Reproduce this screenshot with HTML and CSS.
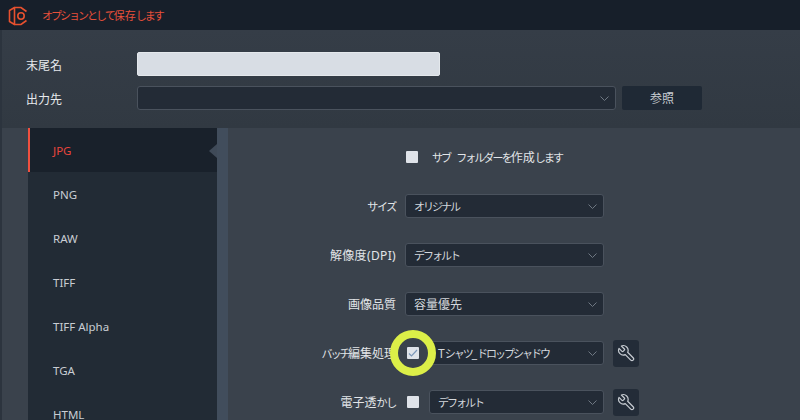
FILE: index.html
```html
<!DOCTYPE html>
<html lang="ja">
<head>
<meta charset="utf-8">
<title>オプションとして保存します</title>
<link rel="stylesheet" href="styles.css">
</head>
<body>
<div class="window">
  <header class="titlebar">
    <svg class="logo" width="20" height="20" viewBox="0 0 20 20" fill="none" stroke="#e8512f" stroke-width="1.6">
      <path d="M6.5 1.5 L1.5 4.5 V15.5 L6.5 18.5 Z" stroke-linejoin="round"/>
      <path d="M6.5 1.5 H13 L18.5 5.5 M18.5 14.5 L13 18.5 H6.5"/>
      <circle cx="13" cy="10" r="3.2"/>
    </svg>
    <span class="title"><span class="kana">オプションとして</span>保存<span class="kana">します</span></span>
  </header>
  <section class="top">
    <div class="top-row">
      <span class="top-label">末尾名</span>
      <div class="text-input"></div>
    </div>
    <div class="top-row">
      <span class="top-label">出力先</span>
      <div class="select path"><svg class="chev" width="9" height="5" viewBox="0 0 9 5"><path d="M.5 .5 L4.5 4.5 L8.5 .5" fill="none" stroke="#6f7883" stroke-width="1"/></svg></div>
      <button class="browse">参照</button>
    </div>
  </section>
  <main class="main">
    <nav class="sidebar">
      <div class="item active">JPG</div>
      <div class="item">PNG</div>
      <div class="item">RAW</div>
      <div class="item">TIFF</div>
      <div class="item">TIFF Alpha</div>
      <div class="item">TGA</div>
      <div class="item">HTML</div>
    </nav>
    <div class="scroll"><span class="pointer"></span></div>
    <div class="content">
      <div class="row check-row">
        <span class="checkbox"></span>
        <span class="check-text"><span class="kana">サブ フォルダーを</span>作成<span class="kana">します</span></span>
      </div>
      <div class="row">
        <span class="label"><span class="kana">サイズ</span></span>
        <div class="select wide"><span class="kana">オリジナル</span><svg class="chev" width="9" height="5" viewBox="0 0 9 5"><path d="M.5 .5 L4.5 4.5 L8.5 .5" fill="none" stroke="#6f7883" stroke-width="1"/></svg></div>
      </div>
      <div class="row">
        <span class="label spaced">解像度(DPI)</span>
        <div class="select wide"><span class="kana">デフォルト</span><svg class="chev" width="9" height="5" viewBox="0 0 9 5"><path d="M.5 .5 L4.5 4.5 L8.5 .5" fill="none" stroke="#6f7883" stroke-width="1"/></svg></div>
      </div>
      <div class="row">
        <span class="label">画像品質</span>
        <div class="select wide"><span>容量優先</span><svg class="chev" width="9" height="5" viewBox="0 0 9 5"><path d="M.5 .5 L4.5 4.5 L8.5 .5" fill="none" stroke="#6f7883" stroke-width="1"/></svg></div>
      </div>
      <div class="row">
        <span class="label"><span class="kana tight">バッチ</span>編集処理</span>
        <span class="checkbox inline">
          <svg width="10" height="8" viewBox="0 0 10 8"><path d="M1 4.5 L3.5 7 L9 1" fill="none" stroke="#7c97b8" stroke-width="1.2"/></svg>
          <span class="ring"></span>
        </span>
        <div class="select narrow"><span>T<span class="kana">シャツ</span>_<span class="kana">ドロップシャドウ</span></span><svg class="chev" width="9" height="5" viewBox="0 0 9 5"><path d="M.5 .5 L4.5 4.5 L8.5 .5" fill="none" stroke="#6f7883" stroke-width="1"/></svg></div>
        <button class="tool"><svg class="wrench" width="19" height="19" viewBox="0 0 24 24"><path d="M9.3 6.3a1 1 0 0 1 0 1.4l-1.6 1.6a1 1 0 0 1-1.4 0l-3.77-3.77a6 6 0 0 0 7.94 7.94l6.91 6.91a2.12 2.12 0 0 0 3-3l-6.91-6.91a6 6 0 0 0-7.94-7.94l3.76 3.76z"/></svg></button>
      </div>
      <div class="row">
        <span class="label">電子透<span class="kana">かし</span></span>
        <span class="checkbox inline"></span>
        <div class="select narrow"><span class="kana">デフォルト</span><svg class="chev" width="9" height="5" viewBox="0 0 9 5"><path d="M.5 .5 L4.5 4.5 L8.5 .5" fill="none" stroke="#6f7883" stroke-width="1"/></svg></div>
        <button class="tool"><svg class="wrench" width="19" height="19" viewBox="0 0 24 24"><path d="M9.3 6.3a1 1 0 0 1 0 1.4l-1.6 1.6a1 1 0 0 1-1.4 0l-3.77-3.77a6 6 0 0 0 7.94 7.94l6.91 6.91a2.12 2.12 0 0 0 3-3l-6.91-6.91a6 6 0 0 0-7.94-7.94l3.76 3.76z"/></svg></button>
      </div>
    </div>
  </main>
</div>
</body>
</html>
```
FILE: styles.css
```css
* { box-sizing: border-box; }
html, body { margin: 0; padding: 0; }
body {
  width: 800px;
  height: 420px;
  overflow: hidden;
  background: #333b45;
  font-family: "Noto Sans", "Noto Sans CJK JP", sans-serif;
  font-size: 12px;
  color: #d8dce1;
}
.window { display: flex; flex-direction: column; height: 420px; overflow: hidden; }
.titlebar {
  height: 30px;
  flex: none;
  background: #171f2a;
  display: flex;
  align-items: center;
  padding-left: 8px;
}
.logo { flex: none; margin-right: 14px; margin-top: 1px; }
.title { color: #e8503a; font-size: 11px; }
.kana { font-size: 11px; letter-spacing: -1.3px; }
.title .kana { letter-spacing: -2px; }
.select .kana { letter-spacing: -2px; }
.check-text .kana { letter-spacing: -1.9px; word-spacing: 5px; }
.label .kana.tight { letter-spacing: -2.2px; }
.top {
  height: 98px;
  flex: none;
  padding: 22px 0 0 24px;
  display: flex;
  flex-direction: column;
  gap: 10px;
  border-left: 2px solid #2c343e;
  background: linear-gradient(#353d47, #313942);
}
.top-row { display: flex; align-items: center; height: 24px; }
.top-label { width: 111px; padding-top: 1px; font-size: 12px; color: #e6e9ec; }
.text-input {
  width: 303px;
  height: 24px;
  background: #d8dde4;
  border: 1px solid #e4e8ec;
  border-radius: 2px;
}
.select {
  height: 24px;
  background: #232b36;
  border: 1px solid #4a525d;
  border-radius: 3px;
  display: flex;
  align-items: center;
  justify-content: space-between;
  padding: 0 6px 0 8px;
  font-size: 12px;
  color: #d3d7dc;
  white-space: nowrap;
}
.select.path { width: 479px; justify-content: flex-end; }
.chev { flex: none; }
.browse {
  margin-left: 6px;
  width: 80px;
  height: 24px;
  background: #1f2935;
  border: none;
  border-radius: 2px;
  color: #c8ccd2;
  font: inherit;
  font-size: 12px;
  padding: 0;
}
.main {
  flex: 1;
  display: flex;
  padding-left: 26px;
  border-left: 2px solid #2c343e;
  background: #3a424c;
  min-height: 0;
}
.sidebar { width: 189px; flex: none; background: #222b35; }
.item {
  height: 44px;
  padding: 1px 0 0 25px;
  display: flex;
  align-items: center;
  font-size: 11.5px;
  color: #c9cdd3;
}
.item.active {
  background: #19212b;
  color: #e8453c;
  border-left: 2px solid #f0503f;
  padding-left: 23px;
}
.scroll { width: 11px; flex: none; background: #414d5c; position: relative; }
.pointer {
  position: absolute;
  left: -8px;
  top: 16px;
  border-style: solid;
  border-width: 7px 8px 7px 0;
  border-color: transparent #3f4a58 transparent transparent;
}
.content {
  flex: 1;
  background: #3a424c;
  padding-top: 17px;
  display: flex;
  flex-direction: column;
  gap: 25px;
}
.row { display: flex; align-items: center; height: 24px; flex: none; }
.check-row { padding-left: 178px; }
.check-text { margin-left: 14px; font-size: 12px; color: #e2e5e8; }
.label {
  width: 168px;
  text-align: right;
  font-size: 12px;
  color: #e2e5e8;
  white-space: nowrap;
  flex: none;
}
.label.spaced { letter-spacing: .35px; }
.wide { width: 199px; margin-left: 9px; }
.narrow { width: 175px; margin-left: 10px; }
.checkbox {
  width: 12px;
  height: 12px;
  background: #dfe3e9;
  border-radius: 1px;
  flex: none;
  display: flex;
  align-items: center;
  justify-content: center;
  position: relative;
}
.checkbox.inline { margin-left: 11px; margin-top: -1px; }
.ring {
  position: absolute;
  left: -17px;
  top: -17px;
  width: 46px;
  height: 46px;
  border: 8px solid #dcef48;
  border-radius: 50%;
}
.tool {
  margin-left: 9px;
  width: 26px;
  height: 27px;
  background: #232c38;
  border: none;
  border-radius: 3px;
  padding: 0;
  display: flex;
  align-items: center;
  justify-content: center;
}
.wrench { fill: none; stroke: #c8cdd3; stroke-width: 1.5; stroke-linejoin: round; stroke-linecap: round; }
```
